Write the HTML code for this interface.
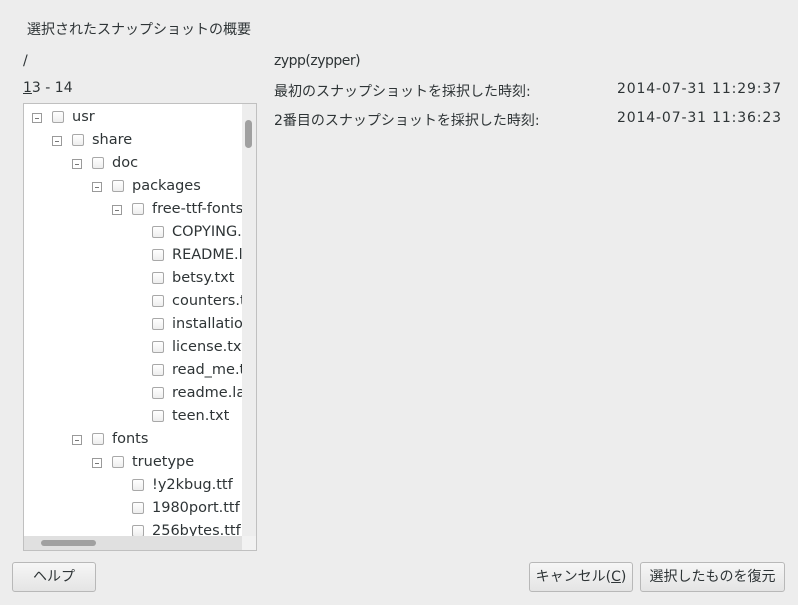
<!DOCTYPE html>
<html><head><meta charset="utf-8"><style>
body{margin:0;width:798px;height:605px;background:#ededed;font-family:"DejaVu Sans","Noto Sans CJK JP",sans-serif;font-size:14px;color:#2e3436;position:relative;overflow:hidden}
.a{position:absolute;white-space:nowrap}
.tree{position:absolute;left:23px;top:103px;width:232px;height:446px;background:#fff;border:1px solid #c0c0c0;overflow:hidden;font-size:14.5px}
.row{position:absolute;height:23px;line-height:25px;white-space:nowrap}
.exp{position:absolute;width:8px;height:8px;border:1px solid #9a9a9a;top:8px}
.exp:after{content:"";position:absolute;left:2px;top:4px;width:4px;height:1px;background:#777}
.cb{position:absolute;width:10px;height:10px;border:1px solid #a8a8a8;border-radius:2px;top:6px;background:linear-gradient(#fff,#eee)}
.btn{position:absolute;height:28px;border:1px solid #b8b8b8;border-radius:3px;background:linear-gradient(#f6f6f6,#e4e4e4);text-align:center;line-height:29px;font-size:14px}
</style></head><body>
<div class="a" style="left:27px;top:19px">選択されたスナップショットの概要</div>
<div class="a" style="left:23px;top:53px">/</div>
<div class="a" style="left:23px;top:80px"><u>1</u>3 - 14</div>
<div class="a" style="left:274px;top:53px;letter-spacing:-0.5px">zypp(zypper)</div>
<div class="a" style="left:274px;top:81px">最初のスナップショットを採択した時刻:</div>
<div class="a" style="left:617px;top:81px;letter-spacing:0.85px">2014-07-31 11:29:37</div>
<div class="a" style="left:274px;top:110px">2番目のスナップショットを採択した時刻:</div>
<div class="a" style="left:617px;top:110px;letter-spacing:0.85px">2014-07-31 11:36:23</div>
<div class="tree">
<div class="row" style="top:1px;left:8px"><span class="exp" style="left:0"></span><span class="cb" style="left:20px"></span><span style="margin-left:40px">usr</span></div>
<div class="row" style="top:24px;left:28px"><span class="exp" style="left:0"></span><span class="cb" style="left:20px"></span><span style="margin-left:40px">share</span></div>
<div class="row" style="top:47px;left:48px"><span class="exp" style="left:0"></span><span class="cb" style="left:20px"></span><span style="margin-left:40px">doc</span></div>
<div class="row" style="top:70px;left:68px"><span class="exp" style="left:0"></span><span class="cb" style="left:20px"></span><span style="margin-left:40px">packages</span></div>
<div class="row" style="top:93px;left:88px"><span class="exp" style="left:0"></span><span class="cb" style="left:20px"></span><span style="margin-left:40px">free-ttf-fonts</span></div>
<div class="row" style="top:116px;left:128px"><span class="cb" style="left:0"></span><span style="margin-left:20px">COPYING.l</span></div>
<div class="row" style="top:139px;left:128px"><span class="cb" style="left:0"></span><span style="margin-left:20px">README.ls</span></div>
<div class="row" style="top:162px;left:128px"><span class="cb" style="left:0"></span><span style="margin-left:20px">betsy.txt</span></div>
<div class="row" style="top:185px;left:128px"><span class="cb" style="left:0"></span><span style="margin-left:20px">counters.txt</span></div>
<div class="row" style="top:208px;left:128px"><span class="cb" style="left:0"></span><span style="margin-left:20px">installation</span></div>
<div class="row" style="top:231px;left:128px"><span class="cb" style="left:0"></span><span style="margin-left:20px">license.txt</span></div>
<div class="row" style="top:254px;left:128px"><span class="cb" style="left:0"></span><span style="margin-left:20px">read_me.txt</span></div>
<div class="row" style="top:277px;left:128px"><span class="cb" style="left:0"></span><span style="margin-left:20px">readme.lat</span></div>
<div class="row" style="top:300px;left:128px"><span class="cb" style="left:0"></span><span style="margin-left:20px">teen.txt</span></div>
<div class="row" style="top:323px;left:48px"><span class="exp" style="left:0"></span><span class="cb" style="left:20px"></span><span style="margin-left:40px">fonts</span></div>
<div class="row" style="top:346px;left:68px"><span class="exp" style="left:0"></span><span class="cb" style="left:20px"></span><span style="margin-left:40px">truetype</span></div>
<div class="row" style="top:369px;left:108px"><span class="cb" style="left:0"></span><span style="margin-left:20px">!y2kbug.ttf</span></div>
<div class="row" style="top:392px;left:108px"><span class="cb" style="left:0"></span><span style="margin-left:20px">1980port.ttf</span></div>
<div class="row" style="top:415px;left:108px"><span class="cb" style="left:0"></span><span style="margin-left:20px">256bytes.ttf</span></div>
<div style="position:absolute;left:218px;top:0;width:14px;height:432px;background:#ededed"></div>
<div style="position:absolute;left:221px;top:16px;width:7px;height:28px;background:#a0a0a0;border-radius:4px"></div>
<div style="position:absolute;left:0;top:432px;width:218px;height:14px;background:#e0e0e0"></div>
<div style="position:absolute;left:17px;top:436px;width:55px;height:6px;background:#a0a0a0;border-radius:3px"></div>
<div style="position:absolute;left:218px;top:432px;width:14px;height:14px;background:#f2f2f2"></div>
</div>
<div class="btn" style="left:12px;top:562px;width:82px">ヘルプ</div>
<div class="btn" style="left:529px;top:562px;width:102px">キャンセル(<u>C</u>)</div>
<div class="btn" style="left:640px;top:562px;width:143px">選択したものを復元</div>
</body></html>
